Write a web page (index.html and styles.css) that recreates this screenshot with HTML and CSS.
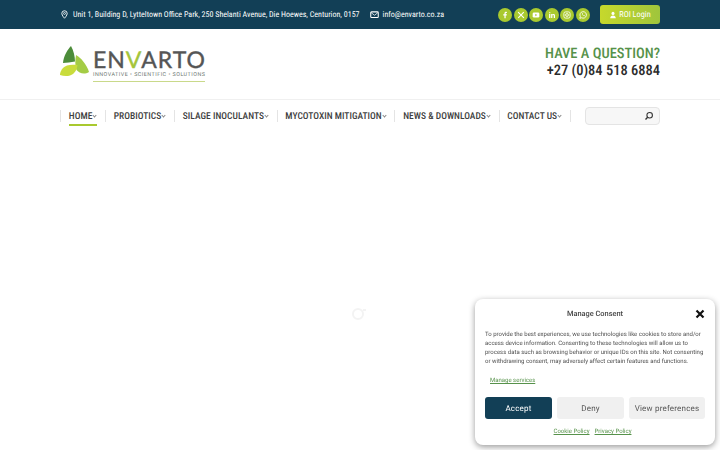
FILE: index.html
```html
<!DOCTYPE html>
<html>
<head>
<meta charset="utf-8">
<title>Envarto</title>
<link rel="stylesheet" href="styles.css">
</head>
<body>
<div class="topbar">
    <div class="contact">
        <span class="contact-item">
            <svg class="contact-icon" viewBox="0 0 12 12"><path d="M6 1a3.6 3.6 0 0 0-3.6 3.6C2.400 7.200 6 11 6 11s3.600-3.800 3.600-6.400A3.600 3.600 0 0 0 6 1z" fill="none" stroke="#fff" stroke-width="1.200"/><circle cx="6" cy="4.600" r="1.300" fill="none" stroke="#fff"/></svg>
            Unit 1, Building D, Lytteltown Office Park, 250 Shelanti Avenue, Die Hoewes, Centurion, 0157
        </span>
        <span class="contact-item">
            <svg class="contact-icon" viewBox="0 0 12 12"><rect x="1" y="2.500" width="10" height="7.500" rx="1" fill="none" stroke="#fff" stroke-width="1.400"/><path d="M1.500 3.500 6 7l4.500-3.500" fill="none" stroke="#fff"/></svg>
            info@envarto.co.za
        </span>
    </div>
    <div class="social">
        <span class="social-dot"><svg viewBox="0 0 12 12"><path d="M6.800 10V6.500h1.300l.2-1.400H6.800v-.8c0-.4.200-.7.700-.7h.8V2.300c-.3 0-.7-.1-1.100-.1-1.100 0-1.900.7-1.900 1.900v1H3.900v1.400h1.400V10z" fill="#fff"/></svg></span>
        <span class="social-dot"><svg viewBox="0 0 12 12"><path d="M2.500 2.500l7 7M9.300 2.500l-6.600 7" stroke="#fff" stroke-width="1.300" fill="none"/></svg></span>
        <span class="social-dot"><svg viewBox="0 0 12 12"><rect x="2" y="3" width="8" height="6" rx="1.600" fill="#fff"/><path d="M5.200 4.600v2.800L7.400 6z" fill="#a9c92f"/></svg></span>
        <span class="social-dot"><svg viewBox="0 0 12 12"><path d="M2.500 4.800h1.500V9.500H2.500zM2.500 2.600h1.500V4H2.500zM5 4.800h1.400v.7c.3-.5.800-.8 1.500-.8 1.200 0 1.700.8 1.700 2v2.800H8.100V7c0-.6-.2-1-.8-1s-.9.400-.9 1v2.500H5z" fill="#fff"/></svg></span>
        <span class="social-dot"><svg viewBox="0 0 12 12"><rect x="2.300" y="2.300" width="7.400" height="7.400" rx="2" fill="none" stroke="#fff"/><circle cx="6" cy="6" r="1.700" fill="none" stroke="#fff"/></svg></span>
        <span class="social-dot"><svg viewBox="0 0 12 12"><path d="M2.200 10l.6-2.200A3.900 3.900 0 1 1 4.300 9.300z" fill="none" stroke="#fff"/><path d="M4.600 4.200c.5 1.700 1.400 2.700 3 3.300l.6-.8-1-.6-.4.400c-.6-.3-1-.8-1.300-1.400l.4-.4-.5-1z" fill="#fff"/></svg></span>
        <a class="login-btn"><svg viewBox="0 0 12 12"><circle cx="6" cy="3.600" r="2.300" fill="#fff"/><path d="M1.800 11c0-3 1.800-4.400 4.200-4.400S10.200 8 10.200 11z" fill="#fff"/></svg>ROI Login</a>
    </div>
</div>

<header class="masthead">
    <div class="logo">
        <svg class="logo-mark" viewBox="0 0 30 31">
            <path d="M11 0c-3 3-7.500 10-8 17 3.500-.5 8-.5 12-1.500 0-5-1.500-11-4-15.500z" fill="#4c8c3a"/>
            <path d="M16 9c5 3 10.500 9 13 17-5 3-10 1-12.500-2-1.500-4-1.500-10-.5-15z" fill="#a4cc45"/>
            <path d="M0 29c0-4 3-8 7-9.500 3-1 7-1 10.500-.5-.5 5-3 9-7.500 10.500-3.500 1-7 .5-10-.5z" fill="#c9dc3c"/>
        </svg>
        <div class="logo-text">
            <div class="logo-name">EN<span class="logo-v">V</span>ARTO</div>
            <div class="logo-tag">INNOVATIVE &bull; SCIENTIFIC &bull; SOLUTIONS</div>
        </div>
    </div>
    <div class="question">
        <div class="question-title">HAVE A QUESTION?</div>
        <div class="question-phone">+27 (0)84 518 6884</div>
    </div>
</header>

<nav class="mainnav">
    <ul class="menu">
        <li class="menu-item current"><span>HOME</span><i class="caret"></i></li>
        <li class="menu-item"><span>PROBIOTICS</span><i class="caret"></i></li>
        <li class="menu-item"><span>SILAGE INOCULANTS</span><i class="caret"></i></li>
        <li class="menu-item"><span>MYCOTOXIN MITIGATION</span><i class="caret"></i></li>
        <li class="menu-item"><span>NEWS &amp; DOWNLOADS</span><i class="caret"></i></li>
        <li class="menu-item"><span>CONTACT US</span><i class="caret"></i></li>
    </ul>
    <div class="search">
        <svg viewBox="0 0 12 12"><circle cx="6.800" cy="5" r="3.300" fill="none" stroke="#333" stroke-width="1.300"/><path d="M4.400 7.500 1.800 10.200" stroke="#333" stroke-width="1.600"/></svg>
    </div>
</nav>

<div class="loader"></div>

<div class="consent">
    <div class="consent-head">
        <span class="consent-title">Manage Consent</span>
        <svg class="consent-close" viewBox="0 0 10 10"><path d="M1.500 1.500l7 7M8.500 1.500l-7 7" stroke="#111" stroke-width="2.200" fill="none"/></svg>
    </div>
    <p class="consent-text">To provide the best experiences, we use technologies like cookies to store and/or access device information. Consenting to these technologies will allow us to process data such as browsing behavior or unique IDs on this site. Not consenting or withdrawing consent, may adversely affect certain features and functions.</p>
    <a class="consent-link manage">Manage services</a>
    <div class="consent-buttons">
        <button class="btn btn-accept">Accept</button>
        <button class="btn">Deny</button>
        <button class="btn btn-prefs">View preferences</button>
    </div>
    <div class="consent-policies">
        <a class="consent-link">Cookie Policy</a>
        <a class="consent-link">Privacy Policy</a>
    </div>
</div>
</body>
</html>
```

FILE: styles.css
```css
html, body {
    margin: 0;
    padding: 0;
}
body {
    width: 720px;
    height: 450px;
    overflow: hidden;
    background: #fff;
    font-family: 'Roboto', sans-serif;
    text-rendering: geometricPrecision;
    color: #333;
}
.topbar {
    display: flex;
    justify-content: space-between;
    align-items: center;
    height: 29px;
    padding: 0 60px;
    background: #123f56;
    color: #fff;
    font-size: 8px;
}
.contact {
    display: flex;
    gap: 10px;
}
.contact-item {
    display: flex;
    align-items: center;
    gap: 3px;
    white-space: nowrap;
    font-stretch: condensed;
}
.contact-icon {
    width: 9px;
    height: 9px;
    margin-right: 1px;
}
.social {
    display: flex;
    align-items: center;
    gap: 1.500px;
}
.social-dot {
    display: flex;
    align-items: center;
    justify-content: center;
    width: 14px;
    height: 14px;
    border-radius: 50%;
    background: #a9c92f;
}
.social-dot svg {
    width: 10px;
    height: 10px;
}
.login-btn {
    display: flex;
    align-items: center;
    justify-content: center;
    gap: 2px;
    width: 60px;
    height: 19px;
    margin-left: 9px;
    border-radius: 3px;
    background: linear-gradient(90deg, #c6d82c, #9fc53c);
    font-size: 8.300px;
    font-stretch: condensed;
}
.login-btn svg {
    width: 8px;
    height: 8px;
}
.masthead {
    display: flex;
    justify-content: space-between;
    align-items: center;
    height: 70px;
    padding: 0 60px;
    border-bottom: 1px solid #f0f0f0;
}
.logo {
    display: flex;
    align-items: flex-start;
    gap: 3px;
}
.logo-mark {
    width: 30px;
    height: 31px;
}
.logo-text {
    width: 112px;
    margin-top: 3px;
}
.logo-name {
    font-family: 'Lato', sans-serif;
    font-size: 23px;
    line-height: 20px;
    letter-spacing: 1px;
    -webkit-text-stroke: 0.4px #555;
    color: #555;
    white-space: nowrap;
}
.logo-v {
    color: #a4c53a;
    -webkit-text-stroke: 0.4px #a4c53a;
}
.logo-tag {
    margin-top: 3px;
    padding-bottom: 3px;
    border-bottom: 1px solid #c9d98a;
    font-size: 5.400px;
    letter-spacing: 0.480px;
    white-space: nowrap;
    color: #6b756f;
}
.question {
    margin-top: -5px;
    text-align: right;
    font-weight: 500;
    font-size: 14.500px;
    line-height: 17px;
    font-stretch: condensed;
}
.question-title {
    color: #56924a;
}
.question-phone {
    color: #2c2c2c;
}
.mainnav {
    display: flex;
    justify-content: space-between;
    align-items: flex-start;
    padding: 7px 60px 0;
}
.menu {
    display: flex;
    margin: 3px 0 0;
    padding: 0;
    list-style: none;
    border-left: 1px solid #e4e4e4;
}
.menu-item {
    display: flex;
    align-items: flex-start;
    position: relative;
    height: 12px;
    padding: 0 8.600px 0 7.800px;
    border-right: 1px solid #e4e4e4;
    font-size: 9.500px;
    letter-spacing: 0.020px;
    line-height: 13px;
    font-weight: 500;
    font-stretch: condensed;
    white-space: nowrap;
    color: #3f3f3f;
}
.current::after {
    content: "";
    position: absolute;
    left: 8px;
    right: 8px;
    top: 14px;
    height: 2px;
    background: #a9c92f;
}
.caret {
    width: 2px;
    height: 2px;
    margin: 4px 0 0 1px;
    border-right: 1px solid #888;
    border-bottom: 1px solid #888;
    transform: rotate(45deg);
}
.search {
    display: flex;
    align-items: center;
    justify-content: flex-end;
    box-sizing: border-box;
    width: 75px;
    height: 18px;
    padding-right: 5px;
    border: 1px solid #e4e4e4;
    border-radius: 4px;
    background: #f7f7f7;
}
.search svg {
    width: 10px;
    height: 10px;
}
.loader {
    position: absolute;
    left: 352px;
    top: 308px;
    width: 8px;
    height: 8px;
    border: 2px solid #f3f3f3;
    border-radius: 50%;
    filter: blur(0.5px);
}
.loader::after {
    content: "";
    position: absolute;
    left: 9px;
    top: -1px;
    width: 3px;
    height: 2px;
    background: #f3f3f3;
}
.consent {
    position: fixed;
    left: 475px;
    top: 299px;
    box-sizing: border-box;
    width: 240px;
    height: 146px;
    padding: 0 10px;
    border-radius: 8px;
    background: #fff;
    box-shadow: 0 2px 6px rgba(0, 0, 0, 0.4);
}
.consent-head {
    display: flex;
    justify-content: center;
    align-items: center;
    position: relative;
    height: 27px;
    padding-top: 1px;
}
.consent-title {
    font-size: 7.400px;
    font-weight: 500;
    color: #444;
}
.consent-close {
    position: absolute;
    right: 0;
    top: 10px;
    width: 10px;
    height: 10px;
}
.consent-text {
    margin: 3px 0 0;
    font-size: 6px;
    line-height: 9px;
    color: #4d4d4d;
}
.consent-link {
    font-size: 6px;
    color: #56924a;
    text-decoration: underline;
}
.manage {
    display: block;
    margin: 11px 0 0 5px;
}
.consent-buttons {
    display: flex;
    gap: 5px;
    margin-top: 13px;
}
.btn {
    flex: 1 1 0;
    height: 22px;
    padding: 0;
    border: 0;
    border-radius: 3px;
    background: #f0f0f0;
    font-family: 'Roboto', sans-serif;
    text-rendering: geometricPrecision;
    font-size: 8px;
    letter-spacing: 0.2px;
    color: #555;
}
.btn-accept {
    background: #123f56;
    color: #fff;
}
.btn-prefs {
    flex: 0 0 76px;
    white-space: nowrap;
}
.consent-policies {
    display: flex;
    justify-content: center;
    gap: 5px;
    margin-top: 9px;
    padding-right: 5px;
}
```
